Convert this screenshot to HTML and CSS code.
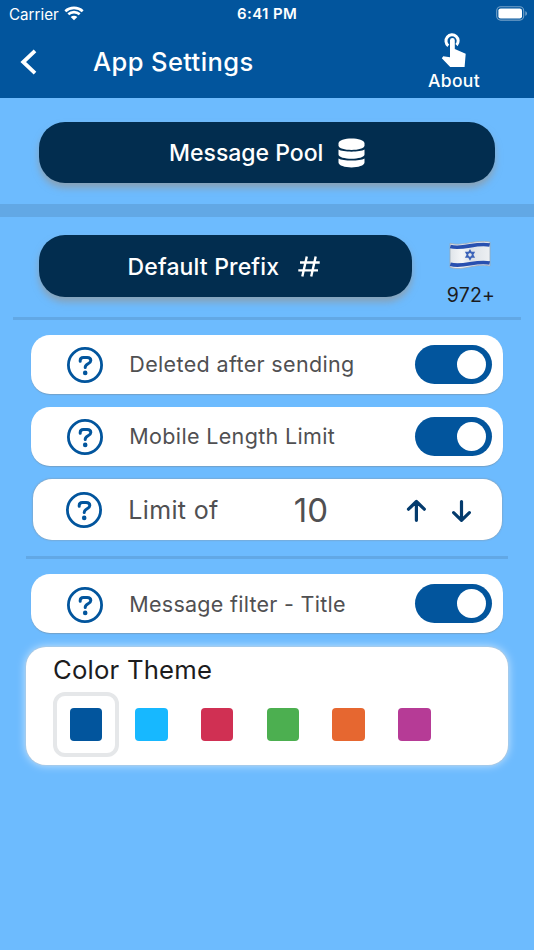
FILE: index.html
```html
<!DOCTYPE html>
<html lang="en">
<head>
<meta charset="utf-8">
<title>App Settings</title>
<link rel="stylesheet" href="styles.css">
</head>
<body>
<svg width="0" height="0" class="defs">
  <symbol id="help" viewBox="0 0 36 36">
    <circle cx="18" cy="18" r="16.6" fill="none" stroke="#02559d" stroke-width="2.8"/>
    <path d="M13.2 14.2V13.6Q13.2 10.5 16.4 10.5H20.2Q23.8 10.5 23.8 13.5C23.8 17 18.2 16.6 18.2 20.4" fill="none" stroke="#02559d" stroke-width="3" stroke-linecap="round"/>
    <circle cx="18.2" cy="25.9" r="2.3" fill="#02559d"/>
  </symbol>
</svg>
<header class="header">
  <div class="status">
    <span class="carrier">Carrier</span>
    <svg class="wifi" width="20" height="15" viewBox="0 0 20 15" fill="none" stroke="#fff" stroke-width="2.6"><path d="M1.3 5.2C6 .8 14 .8 18.7 5.2M4.3 8.3C7.5 5.4 12.5 5.4 15.7 8.3"/><path d="M6.7 11.1C8.6 9.4 11.4 9.4 13.3 11.1L10 14.3Z" fill="#fff" stroke="none"/></svg>
    <span class="time">6:41 PM</span>
    <svg class="battery" width="32" height="15" viewBox="0 0 32 15"><rect x=".7" y=".7" width="27" height="13.4" rx="4" fill="none" stroke="#fff" stroke-opacity=".45" stroke-width="1.1"/><rect x="2.4" y="2.4" width="23.6" height="10" rx="2.2" fill="#fff"/><path d="M29.4 5.2c2 .7 2 3.8 0 4.5z" fill="#fff" fill-opacity=".5"/></svg>
  </div>
  <div class="nav">
    <svg class="back" width="18" height="28" viewBox="0 0 18 28"><path d="M15 2.8 3.2 14 15 25.2" fill="none" stroke="#fff" stroke-width="3.8"/></svg>
    <h1>App Settings</h1>
    <div class="about">
      <svg width="26" height="36" viewBox="0 0 26 36"><path d="M7.3 13.7A6.1 6.1 0 1 1 15.5 13.1" fill="none" stroke="#fff" stroke-width="3"/><path d="M9 8.3a2.3 2.3 0 0 1 4.8 0V17.1L24.7 21.8 23.6 34.9H9.2L.8 26.2 2.3 24.3 9 25.2Z" fill="#fff"/></svg>
      <span>About</span>
    </div>
  </div>
</header>
<main>
  <section class="pool">
    <button class="pill"><span class="pool-text">Message Pool</span>
      <svg class="database" width="27" height="30" viewBox="0 0 27 30" fill="#fff"><path d="M.5 5.4C.5-1 26.5-1 26.5 5.4V7.6C26.5 13.5.5 13.5.5 7.6Z"/><path d="M.5 11.6C5 14.3 22 14.3 26.5 11.6V16.6C26.5 22.2.5 22.2.5 16.6Z"/><path d="M.5 20.5C5 23.3 22 23.3 26.5 20.5V24.6C26.5 31 .5 31 .5 24.6Z"/></svg>
    </button>
  </section>
  <div class="band"></div>
  <section class="prefix">
    <button class="pill"><span class="prefix-text">Default Prefix</span>
      <svg class="hash" width="22" height="21" viewBox="0 0 22 21" fill="none" stroke="#fff" stroke-width="2.4"><path d="M8.8.6 4.3 20.4M17.7.6 13.2 20.4M2 6.5H21.7M.3 14.4H20"/></svg>
    </button>
    <div class="country">
      <svg width="42" height="30" viewBox="0 0 42 30">
        <defs><linearGradient id="cloth"><stop offset="0" stop-color="#dfe4e9"/><stop offset=".3" stop-color="#f4f6f8"/><stop offset=".55" stop-color="#dde2e8"/><stop offset="1" stop-color="#edf0f3"/></linearGradient></defs>
        <path d="M1 3.3C14 7 26-1 41 2V26C27 22.5 15 31.5 1 27.5Z" fill="url(#cloth)" stroke="#9ba9b8" stroke-width=".8"/>
        <path d="M1.3 6.5C14 10 27 2 40.7 5M1.3 24.3C14 28 27 20 40.7 23" fill="none" stroke="#2850b0" stroke-width="3.6"/>
        <path d="M21 10.2 25 17.2H17ZM21 19.4 17 12.5H25Z" fill="none" stroke="#3b62b8" stroke-width="1.3"/>
      </svg>
      <span>972+</span>
    </div>
  </section>
  <div class="rule"></div>
  <section class="cards">
    <div class="card"><svg class="help"><use href="#help"/></svg><span class="label">Deleted after sending</span><i class="toggle"></i></div>
    <div class="card"><svg class="help"><use href="#help"/></svg><span class="label">Mobile Length Limit</span><i class="toggle"></i></div>
    <div class="card limit"><svg class="help"><use href="#help"/></svg><span class="label limit-text">Limit of</span><span class="number">10</span>
      <svg class="arrows" width="66" height="24" viewBox="0 0 66 24" fill="none" stroke="#043b6d" stroke-width="3.2" stroke-linecap="round" stroke-linejoin="round"><path d="M10.4 21.3V2.5M2.5 10.2 10.4 2.5 18.3 10.2M55.5 2.5V21.3M47.6 13.6 55.5 21.3 63.4 13.6"/></svg>
    </div>
  </section>
  <div class="rule short"></div>
  <section class="cards filter">
    <div class="card"><svg class="help"><use href="#help"/></svg><span class="label title-filter">Message filter - Title</span><i class="toggle"></i></div>
  </section>
  <section class="theme">
    <h2>Color Theme</h2>
    <div class="swatches">
      <div class="choice selected"><i class="blue"></i></div>
      <div class="choice"><i class="sky"></i></div>
      <div class="choice"><i class="red"></i></div>
      <div class="choice"><i class="green"></i></div>
      <div class="choice"><i class="orange"></i></div>
      <div class="choice"><i class="purple"></i></div>
    </div>
  </section>
</main>
</body>
</html>
```
FILE: styles.css
```css
* { box-sizing: border-box; }
body { margin: 0; height: 950px; overflow: hidden; background: #6dbbfe; font-family: Inter, "Liberation Sans", sans-serif; color: #1c1c1e; white-space: nowrap; }
svg { display: block; flex: none; }
h1, h2 { margin: 0; }
.defs { display: none; }
.header { height: 98px; background: #02559d; color: #fff; }
.status { display: flex; height: 28px; align-items: center; padding-left: 9px; font-size: 15.2px; }
.carrier { width: 55px; }
.time { width: 72px; margin-left: 153px; padding-bottom: 1px; font-weight: 600; font-size: 15px; letter-spacing: .4px; }
.wifi { margin-top: -1px; }
.battery { margin: -1px 0 0 187px; }
.nav { display: flex; height: 70px; }
.back { margin: 20px 0 0 20px; }
h1 { width: 332px; margin: 17px 0 0 55px; font-size: 25.5px; line-height: 34px; font-weight: 500; letter-spacing: .4px; }
.about { width: 58px; margin-top: 4px; display: flex; flex-direction: column; align-items: center; font-size: 17.5px; line-height: 22px; font-weight: 500; letter-spacing: .3px; }
.about span { margin-top: 2px; }
.pool { height: 106px; padding: 23.5px 39px 0; }
.pill { width: 100%; height: 61.5px; border: 0; padding: 0; border-radius: 26px; background: #022d4f; color: #fff; font: 500 23px/30px Inter, sans-serif; display: flex; align-items: center; box-shadow: 0 5px 7px rgba(155,145,135,.6); }
.pool-text { width: 169.5px; margin-left: 129px; padding: 2px 0 0 1px; text-align: left; letter-spacing: 0; }
.database { margin-top: 1px; }
.band { height: 13px; background: #62a8e5; }
.prefix { height: 99.5px; padding: 18px 0 0 39px; display: flex; }
.prefix .pill { width: 373px; }
.prefix-text { width: 172px; margin-left: 87px; padding: 2px 0 0 1.5px; text-align: left; letter-spacing: .15px; }
.hash { margin-top: 1px; }
.country { width: 60px; margin: 4.5px 0 0 28px; display: flex; flex-direction: column; align-items: center; font-size: 19.5px; line-height: 24px; letter-spacing: .2px; }
.country span { margin: 13.5px 0 0 2px; }
.rule { height: 3px; margin: 0 13px; background: #62a8e5; }
.short { margin: 15.5px 26px 0; }
.cards { padding: 15px 31px 0; display: flex; flex-direction: column; gap: 13px; }
.card { height: 59px; display: flex; align-items: center; padding: 0 10.5px 0 36px; border-radius: 19px; background: #fff; box-shadow: 0 1px 1px rgba(120,130,140,.45); }
.help { width: 36px; height: 36px; margin-top: 1px; }
.label { margin-left: 26.3px; width: 285.7px; font-size: 21.5px; line-height: 30px; color: #505052; letter-spacing: .35px; }
.title-filter { letter-spacing: .27px; }
.toggle { width: 77.5px; height: 39px; border-radius: 20px; background: #02559d; padding: 5px 6.5px; display: flex; justify-content: flex-end; }
.toggle::after { content: ""; width: 29px; height: 29px; border-radius: 50%; background: #fff; }
.limit { height: 61.5px; margin: 0 1.5px; padding-left: 33.5px; border-radius: 19px; box-shadow: 0 0 2px rgba(145,130,120,.85); }
.limit-text { width: 165.5px; font-size: 25px; padding-top: 1px; }
.number { width: 112.2px; padding-top: 2px; font-size: 33px; line-height: 38px; color: #505052; }
.arrows { margin-top: 3px; }
.filter { padding-top: 15.5px; }
.filter .help { margin-top: 2px; }
.theme { height: 118px; margin: 14px 26px 0; padding: 7px 26px 0; border-radius: 20px; background: #fff; box-shadow: 0 0 2px #bbb, 0 0 10px rgba(255,255,255,.7); }
h2 { padding-left: 1px; font-size: 25.7px; line-height: 32px; font-weight: 400; letter-spacing: .2px; }
.swatches { display: flex; margin: 6px 0 0 1.3px; }
.choice { width: 65.7px; height: 65px; padding: 16.3px; }
.selected { border: 4px solid #e5e7e9; border-radius: 12px; padding: 12.3px; }
.choice i { display: block; width: 32.5px; height: 32.5px; border-radius: 4px; }
.blue { background: #02559d; }
.sky { background: #17b8ff; }
.red { background: #d03053; }
.green { background: #4caf50; }
.orange { background: #e66730; }
.purple { background: #b63b96; }
```
